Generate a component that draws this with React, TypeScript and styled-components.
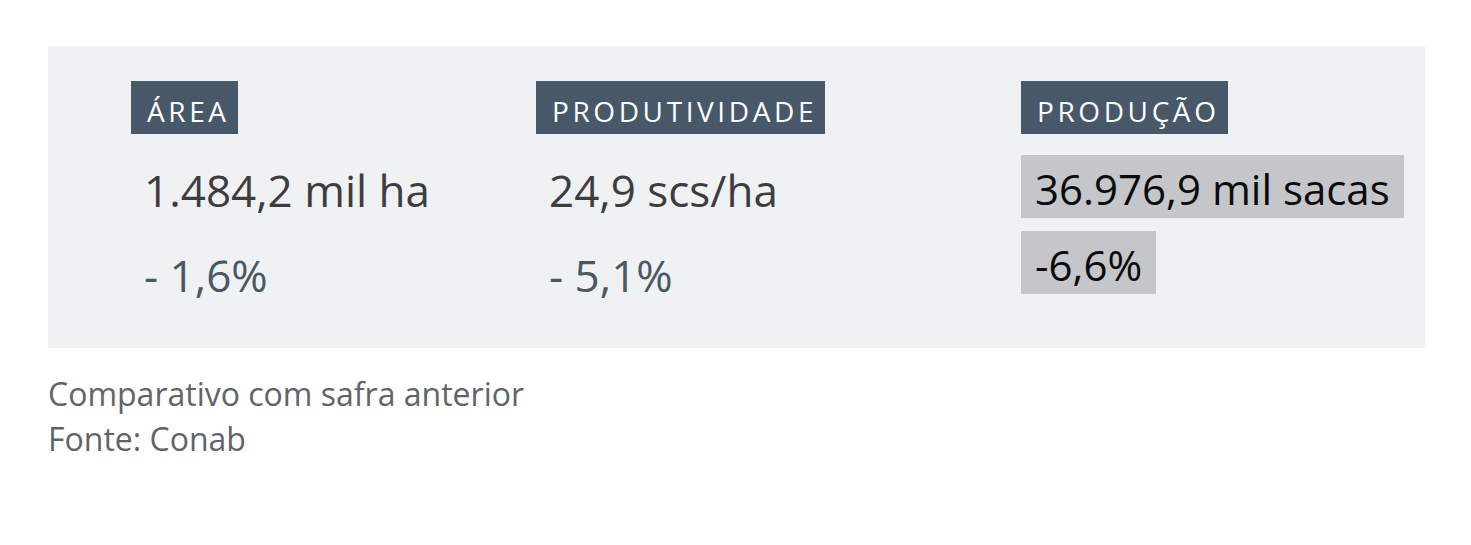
import React from "react";
import styled, { createGlobalStyle } from "styled-components";

const Global = createGlobalStyle`
  html, body { margin: 0; padding: 0; background: #ffffff; }
  body { font-family: "Open Sans", "Noto Sans", sans-serif; }
`;

const Page = styled.div`
  padding: 46px 46px 0 48px;
  width: 1377px;
`;

const Panel = styled.section`
  background: #f0f1f3;
  height: 302px;
  box-sizing: border-box;
  padding: 35px 0 0 83px;
  display: grid;
  grid-template-columns: 405px 485px 1fr;
  align-items: start;
`;

const Column = styled.div`
  display: flex;
  flex-direction: column;
  align-items: flex-start;
`;

const Label = styled.div`
  background: #475869;
  color: #ffffff;
  font-size: 28px;
  letter-spacing: 3.6px;
  height: 53px;
  line-height: 60px;
  overflow: hidden;
  padding: 0 8px 0 16px;
  box-sizing: border-box;
  white-space: nowrap;
`;

const Values = styled.div<{ $highlight?: boolean }>`
  display: flex;
  flex-direction: column;
  align-items: flex-start;
  margin-top: 21px;
  gap: ${(p) => (p.$highlight ? "13px" : "22px")};
`;

const Value = styled.div<{ $highlight?: boolean; $muted?: boolean }>`
  box-sizing: border-box;
  height: 63px;
  line-height: 55px;
  white-space: nowrap;
  padding: ${(p) => (p.$highlight ? "6px 14px 2px 14px" : "8px 14px 0 13px")};
  font-size: ${(p) => (p.$highlight ? "42px" : "44px")};
  background: ${(p) => (p.$highlight ? "#c5c6ca" : "transparent")};
  color: ${(p) => (p.$highlight ? "#0b0b0b" : p.$muted ? "#4a5865" : "#3d3d3f")};
`;

const Caption = styled.div`
  margin-top: 23px;
  color: #5f646b;
  font-size: 32px;
  line-height: 45px;
`;

type Item = { label: string; value: string; change: string; highlight?: boolean };

const items: Item[] = [
  { label: "ÁREA", value: "1.484,2 mil ha", change: "- 1,6%" },
  { label: "PRODUTIVIDADE", value: "24,9 scs/ha", change: "- 5,1%" },
  { label: "PRODUÇÃO", value: "36.976,9 mil sacas", change: "-6,6%", highlight: true },
];

export default function App() {
  return (
    <>
      <Global />
      <Page>
        <Panel>
          {items.map((it) => (
            <Column key={it.label}>
              <Label>{it.label}</Label>
              <Values $highlight={it.highlight}>
                <Value $highlight={it.highlight}>{it.value}</Value>
                <Value $highlight={it.highlight} $muted>
                  {it.change}
                </Value>
              </Values>
            </Column>
          ))}
        </Panel>
        <Caption>
          Comparativo com safra anterior
          <br />
          Fonte: Conab
        </Caption>
      </Page>
    </>
  );
}
